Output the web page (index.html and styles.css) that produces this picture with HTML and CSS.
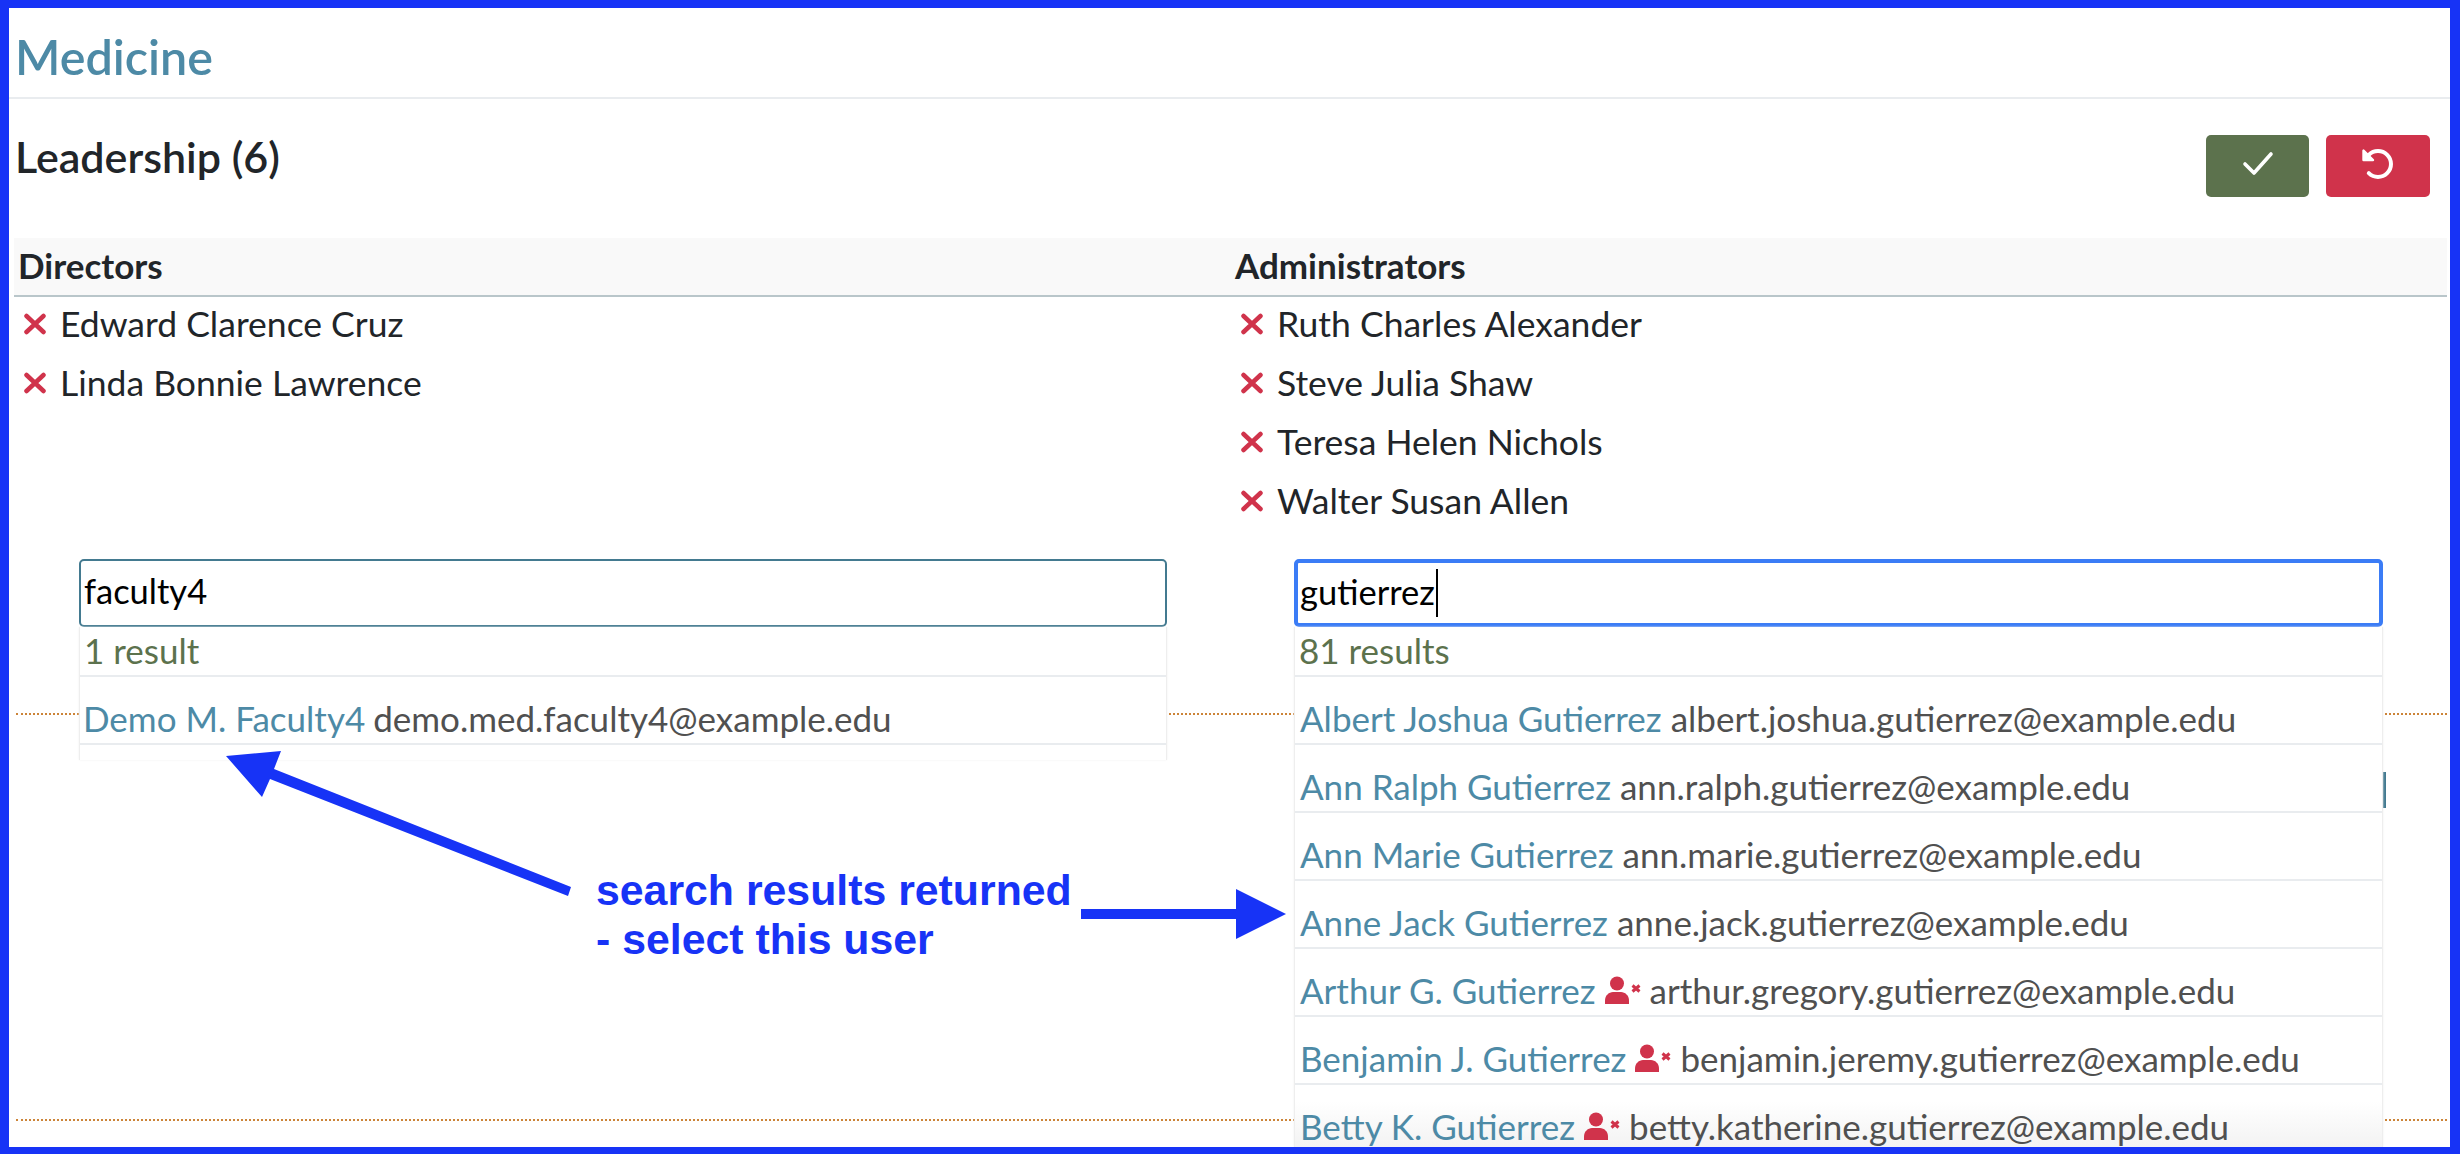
FILE: index.html
```html
<!DOCTYPE html>
<html lang="en">
<head>
    <meta charset="UTF-8">
    <title>Medicine</title>
    <link rel="stylesheet" href="styles.css">
</head>
<body>
<div class="frame">
    <h1 class="title">Medicine</h1>
    <div class="leadHead">
        <h2 class="leadTitle">Leadership (6)</h2>
        <div class="actions">
            <button class="btn btnSave">
                <svg width="32" height="32" viewBox="0 0 32 32" fill="none" stroke="#fff" stroke-width="3.6" stroke-linecap="round" stroke-linejoin="round"><path d="M3 16l9 9L29 6"/></svg>
            </button>
            <button class="btn btnUndo">
                <svg width="32" height="32" viewBox="0 0 32 32" fill="none" stroke="#fff" stroke-width="4" stroke-linecap="round"><path d="M6.800 25.200A13 13 0 1 0 6.800 6.800"/><path d="M1.500 2.500v9.500h9.500z" fill="#fff" stroke-width="2.400" stroke-linejoin="round"/></svg>
            </button>
        </div>
    </div>
    <div class="people">
        <div class="colHead">Directors</div>
        <div class="colHead">Administrators</div>
        <ul class="names">
            <li><svg class="rm" viewBox="0 0 22 22"><path d="M2.500 3l17 16M19.500 3l-17 16"/></svg>Edward Clarence Cruz</li>
            <li><svg class="rm" viewBox="0 0 22 22"><path d="M2.500 3l17 16M19.500 3l-17 16"/></svg>Linda Bonnie Lawrence</li>
        </ul>
        <ul class="names">
            <li><svg class="rm" viewBox="0 0 22 22"><path d="M2.500 3l17 16M19.500 3l-17 16"/></svg>Ruth Charles Alexander</li>
            <li><svg class="rm" viewBox="0 0 22 22"><path d="M2.500 3l17 16M19.500 3l-17 16"/></svg>Steve Julia Shaw</li>
            <li><svg class="rm" viewBox="0 0 22 22"><path d="M2.500 3l17 16M19.500 3l-17 16"/></svg>Teresa Helen Nichols</li>
            <li><svg class="rm" viewBox="0 0 22 22"><path d="M2.500 3l17 16M19.500 3l-17 16"/></svg>Walter Susan Allen</li>
        </ul>
        <div class="search">
            <div class="searchBox">faculty4</div>
            <div class="results resultsShort">
                <div class="count">1 result</div>
                <div class="row"><a>Demo M. Faculty4</a> demo.med.faculty4@example.edu</div>
            </div>
        </div>
        <div class="search searchRight">
            <div class="searchBox searchFocus">gutierrez<span class="caret"></span></div>
            <div class="results resultsLong">
                <div class="count">81 results</div>
                <div class="row"><a>Albert Joshua Gutierrez</a> albert.joshua.gutierrez@example.edu</div>
                <div class="row"><a>Ann Ralph Gutierrez</a> ann.ralph.gutierrez@example.edu</div>
                <div class="row"><a>Ann Marie Gutierrez</a> ann.marie.gutierrez@example.edu</div>
                <div class="row"><a>Anne Jack Gutierrez</a> anne.jack.gutierrez@example.edu</div>
                <div class="row"><a>Arthur G. Gutierrez</a>
                    <svg class="noUser" viewBox="0 0 36 28"><circle cx="12" cy="7.500" r="7"/><path d="M0 28v-3.500c0-5 4-8.500 8-8.500h8c4 0 8 3.500 8 8.500V28z"/><path class="noUserX" d="M27.500 9.500l7 6M34.500 9.500l-7 6"/></svg>
                    arthur.gregory.gutierrez@example.edu</div>
                <div class="row"><a>Benjamin J. Gutierrez</a>
                    <svg class="noUser" viewBox="0 0 36 28"><circle cx="12" cy="7.500" r="7"/><path d="M0 28v-3.500c0-5 4-8.500 8-8.500h8c4 0 8 3.500 8 8.500V28z"/><path class="noUserX" d="M27.500 9.500l7 6M34.500 9.500l-7 6"/></svg>
                    benjamin.jeremy.gutierrez@example.edu</div>
                <div class="row rowLast"><a>Betty K. Gutierrez</a>
                    <svg class="noUser" viewBox="0 0 36 28"><circle cx="12" cy="7.500" r="7"/><path d="M0 28v-3.500c0-5 4-8.500 8-8.500h8c4 0 8 3.500 8 8.500V28z"/><path class="noUserX" d="M27.500 9.500l7 6M34.500 9.500l-7 6"/></svg>
                    betty.katherine.gutierrez@example.edu</div>
            </div>
        </div>
    </div>
    <div class="dots dotsFirst"></div>
    <div class="behind"><span class="behindBtn"></span></div>
    <div class="dots"></div>

    <!-- annotation drawn on top of the screenshot -->
    <svg class="arrows" width="2460" height="1154" viewBox="0 0 2460 1154">
        <path d="M226 756L281 751L274 769L571 887L568 896L270 779L262 797z"/>
        <path d="M1081 909H1236V889L1286 914L1236 939V919H1081z"/>
    </svg>
    <div class="note">search results returned<br>- select this user</div>
</div>
</body>
</html>
```

FILE: styles.css
```css
*{
    margin:0;
    padding:0;
    box-sizing:border-box;
}
body{
    background:#fff;
    font-family:"Lato","Noto Sans",sans-serif;
    color:#212529;
}
.frame{
    position:relative;
    width:2460px;
    height:1154px;
    overflow:hidden;
    border-style:solid;
    border-color:#1733f6;
    border-width:8px 10px 7px 9px;
}
.title{
    height:91px;
    padding:21px 0 0 6px;
    font-size:48.500px;
    line-height:54px;
    font-weight:600;
    color:#4d8aa6;
    border-bottom:2px solid #e9ecef;
}
.leadHead{
    display:flex;
    justify-content:space-between;
    height:139px;
    padding:36px 20px 0 6px;
}
.leadTitle{
    margin-top:-2px;
    font-size:43px;
    line-height:48px;
    font-weight:600;
    color:#212529;
}
.actions{
    display:flex;
    gap:17px;
}
.btn{
    display:flex;
    align-items:center;
    justify-content:center;
    width:104px;
    height:62px;
    padding-bottom:4px;
    border:0;
    border-radius:5px;
}
.btnSave{
    width:103px;
    background:#5c724d;
}
.btnUndo{
    background:#d0334b;
}
.people{
    display:grid;
    grid-template-columns:1217px 1216px;
    margin-left:5px;
}
.colHead{
    height:59px;
    padding:5px 0 0 4px;
    font-size:35px;
    line-height:44px;
    font-weight:700;
    background:#f9f9f9;
    border-bottom:2px solid #b9c6ca;
}
.names{
    list-style:none;
    height:262px;
}
.names li{
    display:flex;
    align-items:center;
    height:59px;
    padding:0 0 6px 10px;
    font-size:35.500px;
}
.rm{
    width:22px;
    height:22px;
    margin-right:14px;
    fill:none;
    stroke:#d0334b;
    stroke-width:4.500;
    stroke-linecap:round;
}
.search{
    position:relative;
    width:1088px;
    margin-left:65px;
}
.searchRight{
    width:1089px;
    margin-left:63px;
}
.searchBox{
    display:flex;
    align-items:center;
    height:68px;
    padding:0 0 5px 3px;
    font-size:34.500px;
    color:#000;
    border:2px solid #437a90;
    border-radius:5px;
}
.searchFocus{
    padding:0 0 3px 2px;
    border:4px solid #3b7cf6;
}
.caret{
    width:2px;
    height:48px;
    margin:3px 0 0 1px;
    background:#000;
}
.results{
    position:absolute;
    z-index:2;
    top:68px;
    left:0;
    right:0;
    overflow:hidden;
    background:#fff;
    border:solid #eee;
    border-width:0 1px;
    box-shadow:0 0 2px #f0f0f0;
}
.resultsShort{
    height:133px;
}
.resultsShort .row{
    padding-left:3px;
    gap:8px;
}
.resultsShort .count{
    padding-left:4px;
}
.resultsLong{
    height:520px;
}
.count{
    height:50px;
    padding:2px 0 0 4px;
    font-size:35px;
    line-height:42px;
    color:#5c724d;
    border-bottom:2px solid #e9ecef;
}
.row{
    display:flex;
    align-items:center;
    gap:9px;
    height:68px;
    padding:16px 0 0 5px;
    font-size:35px;
    color:#505050;
    border-bottom:2px solid #e9ecef;
    white-space:nowrap;
}
.rowLast{
    background:linear-gradient(#fff 25%,#f3f3f3 92%);
}
.row a{
    color:#4d8aa6;
}
.noUser{
    width:36px;
    height:28px;
    fill:#d0334b;
}
.noUserX{
    fill:none;
    stroke:#d0334b;
    stroke-width:3;
}
.dots{
    height:2px;
    margin:0 3px 0 7px;
    border-top:2px dotted #cc8438;
}
.dotsFirst{
    margin-top:86px;
}
.behind{
    display:flex;
    justify-content:flex-end;
    height:404px;
    padding:57px 64px 0 0;
}
.behindBtn{
    width:100px;
    height:36px;
    background:#437a90;
}
.arrows{
    position:absolute;
    z-index:4;
    left:-9px;
    top:-8px;
    fill:#1733f6;
}
.note{
    position:absolute;
    z-index:4;
    left:587px;
    top:858px;
    font-family:"Liberation Sans",Arial,sans-serif;
    font-size:42.800px;
    line-height:49px;
    font-weight:700;
    color:#1733f6;
}
```
